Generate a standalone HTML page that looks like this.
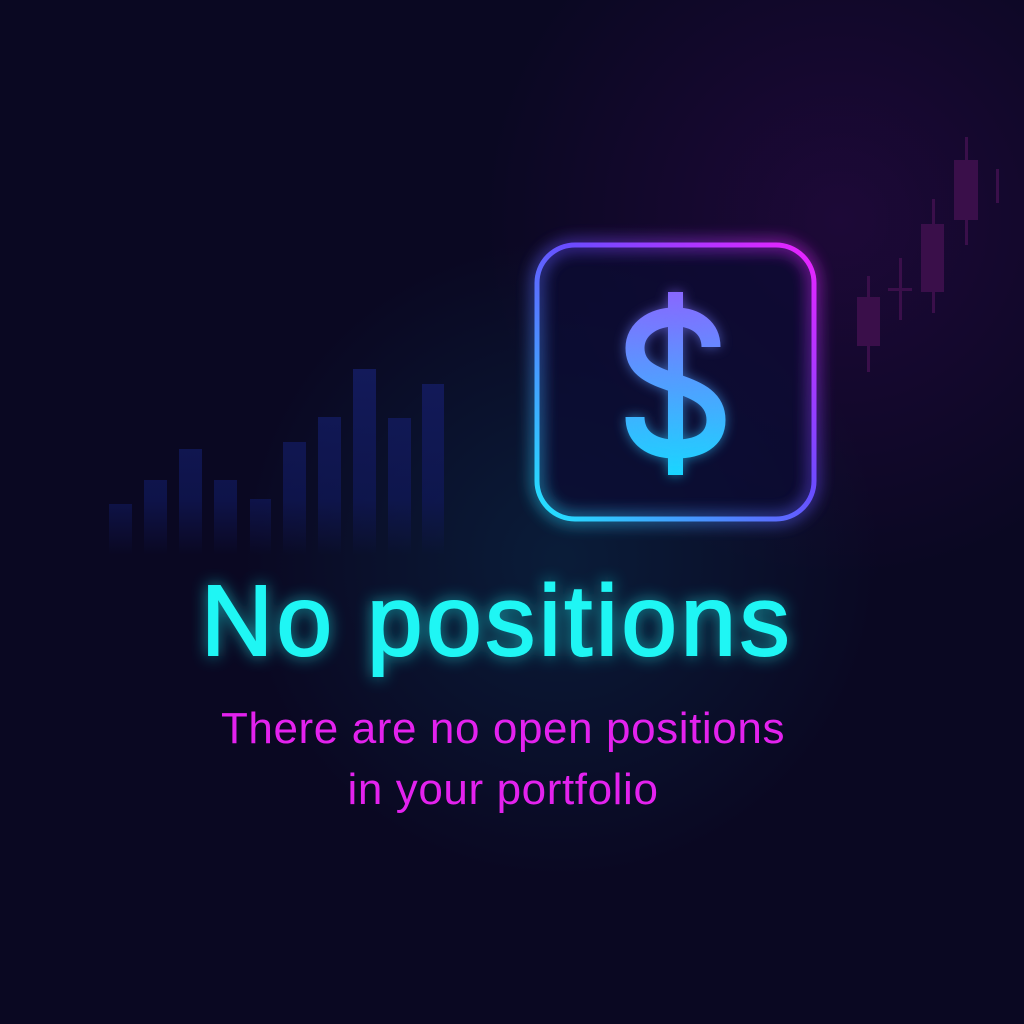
<!DOCTYPE html>
<html><head><meta charset="utf-8"><style>
html,body{margin:0;padding:0;width:1024px;height:1024px;overflow:hidden;background:#0a0822}
</style></head><body>
<svg width="1024" height="1024" viewBox="0 0 1024 1024" xmlns="http://www.w3.org/2000/svg">
<defs>
<radialGradient id="bgP" cx="840" cy="220" r="360" gradientUnits="userSpaceOnUse">
<stop offset="0" stop-color="#22093d" stop-opacity="0.8"/><stop offset="1" stop-color="#22093d" stop-opacity="0"/></radialGradient>
<radialGradient id="bgT" cx="560" cy="560" r="320" gradientUnits="userSpaceOnUse">
<stop offset="0" stop-color="#0a2a48" stop-opacity="0.6"/><stop offset="1" stop-color="#0a2a48" stop-opacity="0"/></radialGradient>
<linearGradient id="bars" x1="0" y1="370" x2="0" y2="555" gradientUnits="userSpaceOnUse">
<stop offset="0" stop-color="#131a5a"/><stop offset="0.7" stop-color="#10185a" stop-opacity="0.7"/><stop offset="1" stop-color="#10185a" stop-opacity="0"/></linearGradient>
<linearGradient id="box" x1="540" y1="520" x2="815" y2="245" gradientUnits="userSpaceOnUse">
<stop offset="0" stop-color="#22e6ff"/><stop offset="0.55" stop-color="#6a4cff"/><stop offset="1" stop-color="#ee22ff"/></linearGradient>
<linearGradient id="dol" x1="0" y1="290" x2="0" y2="478" gradientUnits="userSpaceOnUse">
<stop offset="0" stop-color="#8a66ff"/><stop offset="1" stop-color="#18d8ff"/></linearGradient>
<filter id="glow" x="-30%" y="-30%" width="160%" height="160%"><feGaussianBlur stdDeviation="8"/></filter>
<filter id="glow2" x="-30%" y="-30%" width="160%" height="160%"><feGaussianBlur stdDeviation="6"/></filter>
</defs>
<rect width="1024" height="1024" fill="#0a0822"/>
<rect width="1024" height="1024" fill="url(#bgP)"/>
<rect width="1024" height="1024" fill="url(#bgT)"/>
<g fill="url(#bars)">
<rect x="109" y="504" width="23" height="60"/>
<rect x="144" y="480" width="23" height="80"/>
<rect x="179" y="449" width="23" height="110"/>
<rect x="214" y="480" width="23" height="80"/>
<rect x="250" y="499" width="21" height="60"/>
<rect x="283" y="442" width="23" height="120"/>
<rect x="318" y="417" width="23" height="140"/>
<rect x="353" y="369" width="23" height="190"/>
<rect x="388" y="418" width="23" height="140"/>
<rect x="422" y="384" width="22" height="170"/>
</g>
<g fill="#3a0f4a">
<rect x="857" y="297" width="23" height="49"/><rect x="867" y="276" width="3" height="96"/>
<rect x="888" y="288" width="24" height="3"/><rect x="899" y="258" width="3" height="62"/>
<rect x="921" y="224" width="23" height="68"/><rect x="932" y="199" width="3" height="114"/>
<rect x="954" y="160" width="24" height="60"/><rect x="965" y="137" width="3" height="108"/>
<rect x="996" y="169" width="3" height="34"/>
</g>
<rect x="537" y="245" width="277" height="274" rx="38" fill="#0c0b33" opacity="0.7"/>
<rect x="537" y="245" width="277" height="274" rx="38" fill="none" stroke="url(#box)" stroke-width="7" filter="url(#glow)" opacity="0.9"/>
<rect x="537" y="245" width="277" height="274" rx="38" fill="none" stroke="url(#box)" stroke-width="5"/>
<g id="d">
<path d="M711,347 C711,328 696,317 675,317 C652,317 635,330 635,348 C635,370 655,376 675,383 C700,391 716,400 716,420 C716,440 699,449 675,449 C652,449 635,438 635,417" fill="none" stroke="url(#dol)" stroke-width="19"/>
<rect x="668" y="292" width="15" height="183" fill="url(#dol)"/>
</g>
<use href="#d" filter="url(#glow2)" opacity="0.6"/>
<g font-family="Liberation Sans, sans-serif" text-anchor="middle">
<text x="497" y="655" font-size="100" letter-spacing="3.5" fill="#1ff4f4" stroke="#1ff4f4" stroke-width="2" filter="url(#glow)" opacity="0.6">No positions</text>
<text x="497" y="655" font-size="100" letter-spacing="3.5" fill="#1ff6f4" stroke="#1ff6f4" stroke-width="2">No positions</text>
<text x="503" y="743" font-size="44" letter-spacing="0.6" fill="#e322ee">There are no open positions</text>
<text x="503" y="804" font-size="44" letter-spacing="0.6" fill="#e322ee">in your portfolio</text>
</g>
</svg>
</body></html>
